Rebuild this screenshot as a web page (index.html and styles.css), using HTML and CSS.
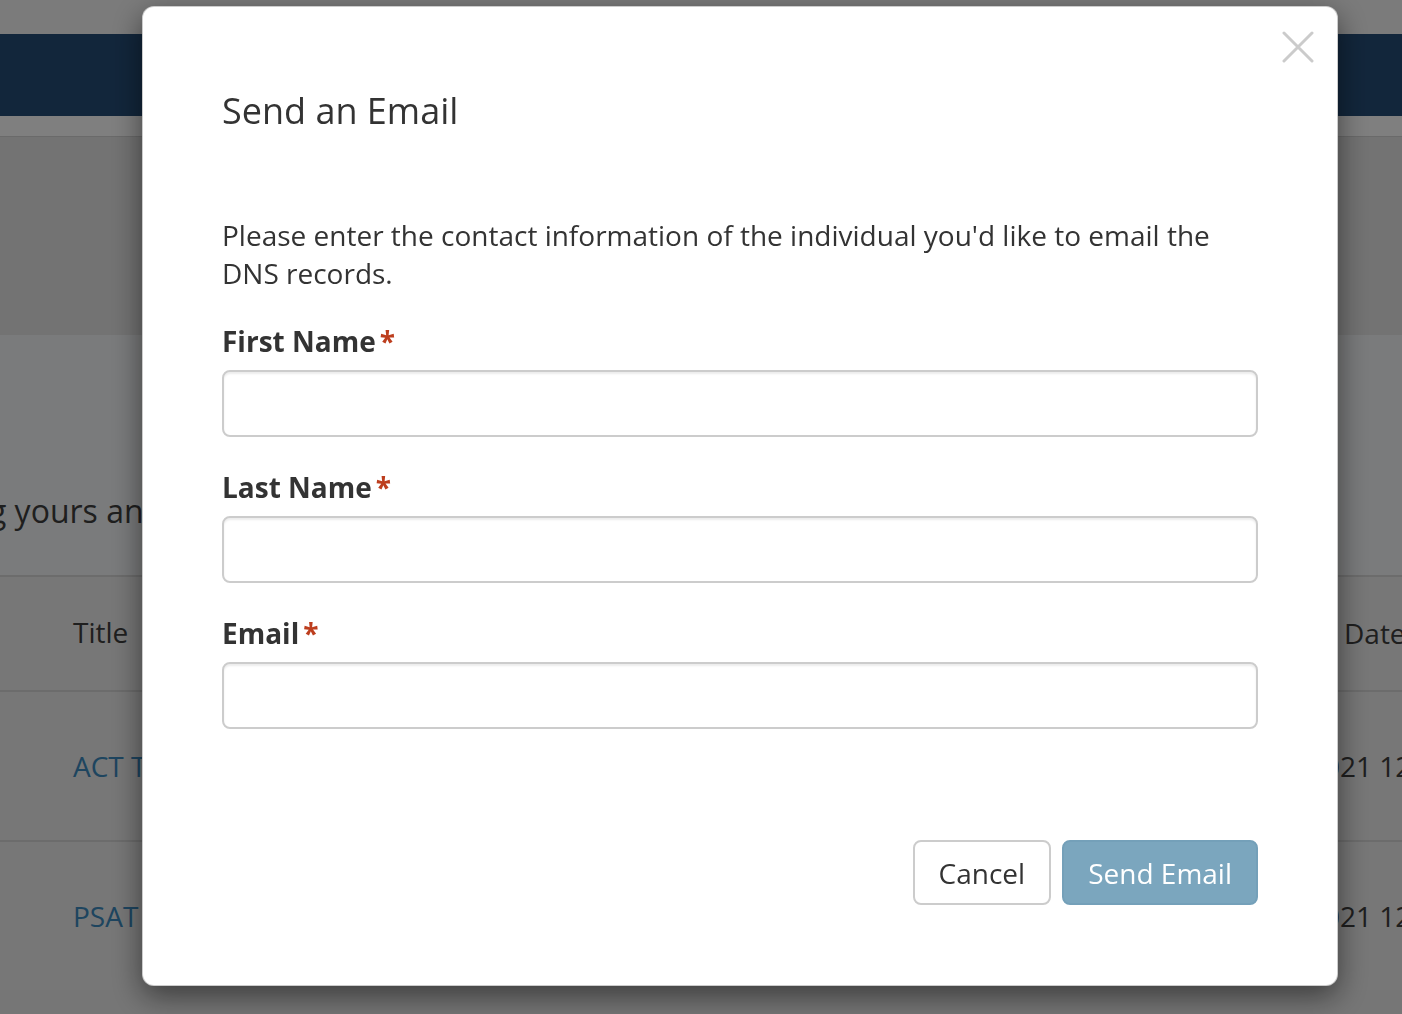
FILE: index.html
```html
<!DOCTYPE html>
<html lang="en">
<head>
<meta charset="utf-8">
<title>Send an Email</title>
<link rel="stylesheet" href="styles.css">
</head>
<body>
<div class="page">
  <div class="topstrip"></div>
  <header class="navbar"></header>
  <div class="subbar"></div>
  <section class="hero"></section>
  <section class="intro">
    <p class="intro-text">Showing yours and</p>
  </section>
  <div class="docs">
    <div class="docs-row docs-head">
      <div class="cell cell-title">Title</div>
      <div class="cell cell-date head-date">Date</div>
    </div>
    <div class="docs-row">
      <div class="cell cell-title"><a class="doc-link" href="#">ACT Test Scores</a></div>
      <div class="cell cell-date">2021 12:04 PM</div>
    </div>
    <div class="docs-row">
      <div class="cell cell-title"><a class="doc-link" href="#">PSAT Results</a></div>
      <div class="cell cell-date">2021 12:01 PM</div>
    </div>
  </div>
</div>

<div class="backdrop"></div>

<div class="modal" role="dialog" aria-labelledby="modal-title">
  <button class="close" type="button" aria-label="Close">
    <svg width="32" height="32" viewBox="0 0 32 32" aria-hidden="true">
      <path d="M2 2 L30 30 M30 2 L2 30" stroke="#cbcbcb" stroke-width="3" stroke-linecap="round" fill="none"/>
    </svg>
  </button>
  <h2 class="modal-title" id="modal-title">Send an Email</h2>
  <p class="modal-intro">Please enter the contact information of the individual you'd like to email the DNS records.</p>
  <form class="modal-form">
    <div class="form-group">
      <label class="form-label" for="first">First Name<span class="req">*</span></label>
      <input class="form-input" id="first" type="text">
    </div>
    <div class="form-group">
      <label class="form-label" for="last">Last Name<span class="req">*</span></label>
      <input class="form-input" id="last" type="text">
    </div>
    <div class="form-group">
      <label class="form-label" for="email">Email<span class="req">*</span></label>
      <input class="form-input" id="email" type="email">
    </div>
    <div class="modal-footer">
      <button class="btn btn-default" type="button">Cancel</button>
      <button class="btn btn-primary" type="button">Send Email</button>
    </div>
  </form>
</div>
</body>
</html>
```

FILE: styles.css
```css
* { box-sizing: border-box; }

html, body {
  margin: 0;
  padding: 0;
  width: 1402px;
  height: 1014px;
  overflow: hidden;
  font-family: "Open Sans", "Noto Sans", sans-serif;
  color: #333;
  background: #ececec;
}

.page {
  width: 1402px;
}

.topstrip { height: 34px; background: #f6f6f6; }
.navbar { height: 82px; background: #254d77; }
.subbar { height: 21px; background: #ffffff; border-bottom: 1px solid #d4d4d4; }
.hero { height: 198px; background: #e6e6e6; }

.intro {
  height: 240px;
  background: #f4f6f8;
  padding-top: 154px;
  overflow: hidden;
}
.intro-text {
  margin: 0 0 0 -120px;
  font-size: 32px;
  line-height: 44px;
  color: #3e3e3e;
  white-space: nowrap;
}

.docs { background: #eeeeee; }
.docs-row {
  display: grid;
  grid-template-columns: 1308px 1fr;
  align-items: center;
  height: 150px;
  border-top: 2px solid #d8d8d8;
  font-size: 28px;
  line-height: 38px;
  color: #3e3e3e;
  white-space: nowrap;
  overflow: hidden;
}
.docs-head { height: 115px; padding-bottom: 4px; }
.cell-title { padding-left: 73px; }
.head-date { padding-left: 36px; padding-top: 3px; }
.doc-link { color: #3c8abf; text-decoration: none; }

.backdrop {
  position: fixed;
  inset: 0;
  background: rgba(0, 0, 0, 0.5);
}

.modal {
  position: fixed;
  left: 142px;
  top: 6px;
  width: 1196px;
  height: 980px;
  background: #fff;
  border: 1px solid rgba(0, 0, 0, 0.2);
  border-radius: 12px;
  box-shadow: 0 10px 30px rgba(0, 0, 0, 0.5);
  padding: 80px 79px 0 79px;
}

.close {
  position: absolute;
  top: 24px;
  right: 23px;
  width: 32px;
  height: 32px;
  padding: 0;
  border: 0;
  background: transparent;
  cursor: pointer;
}
.close svg { display: block; }

.modal-title {
  margin: 0;
  font-size: 36px;
  line-height: 48px;
  font-weight: 400;
  color: #333;
}

.modal-intro {
  margin: 81px 0 0;
  font-size: 28px;
  line-height: 38px;
  color: #333;
}

.modal-form { margin: 0; }

.form-group { margin-top: 30px; }
.form-group + .form-group { margin-top: 31px; }

.form-label {
  display: block;
  font-size: 28px;
  line-height: 38px;
  font-weight: 700;
  color: #333;
}
.req {
  color: #bd3e1e;
  margin-left: 4px;
}

.form-input {
  display: block;
  width: 100%;
  height: 67px;
  margin-top: 10px;
  border: 2px solid #cccccc;
  border-radius: 8px;
  box-shadow: inset 0 2px 2px rgba(0, 0, 0, 0.075);
  background: #fff;
  font-family: inherit;
  font-size: 28px;
  padding: 0 24px;
  outline: none;
}

.modal-footer {
  display: flex;
  justify-content: flex-end;
  gap: 11px;
  margin-top: 111px;
}

.btn {
  height: 65px;
  padding: 0 24px;
  border: 2px solid #cccccc;
  border-radius: 8px;
  font-family: inherit;
  font-size: 28px;
  line-height: 38px;
  cursor: pointer;
}
.btn-default { background: #fff; color: #333; }
.btn-primary {
  background: #7ba6be;
  border-color: #74a0b9;
  color: #fff;
  padding: 0 24px;
}
```
